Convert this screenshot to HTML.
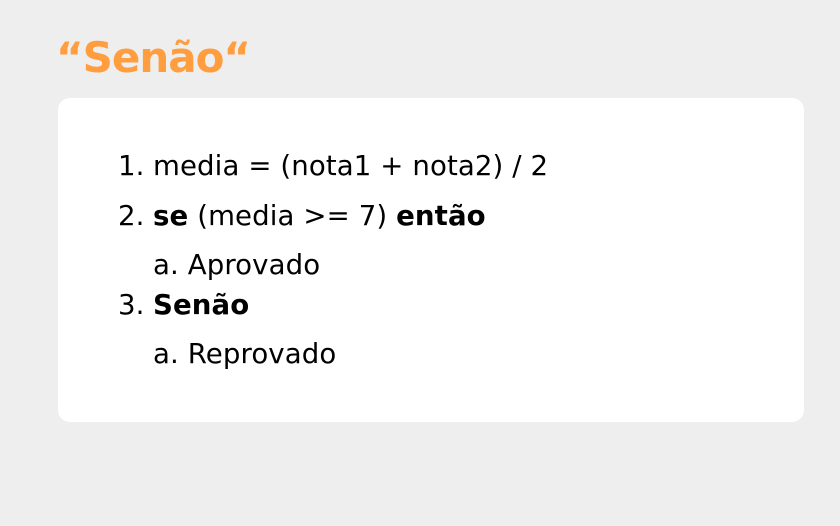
<!DOCTYPE html>
<html><head><meta charset="utf-8"><style>
html,body{margin:0;padding:0;}
body{width:840px;height:526px;background:#eeeeee;position:relative;overflow:hidden;font-family:"DejaVu Sans","Liberation Sans",sans-serif;}
h1{position:absolute;left:56px;top:33px;margin:0;font-size:42px;font-weight:bold;color:#ff9d3f;letter-spacing:-1px;}
.box{position:absolute;left:58px;top:98px;width:746px;height:324px;background:#fff;border-radius:12px;}
.l{position:absolute;font-size:27.6px;color:#000;white-space:nowrap;line-height:30px;letter-spacing:0.1px;}
.n{position:absolute;left:118px;}
.t{position:absolute;left:153px;}
b{font-weight:bold;}
</style></head><body>
<h1>“Senão“</h1>
<div class="box"></div>
<div class="l n" style="top:151px">1.</div><div class="l t" style="top:151px">media = (nota1 + nota2) / 2</div>
<div class="l n" style="top:201px">2.</div><div class="l t" style="top:201px"><b>se</b> (media &gt;= 7) <b>então</b></div>
<div class="l t" style="top:250px">a. Aprovado</div>
<div class="l n" style="top:290px">3.</div><div class="l t" style="top:290px"><b>Senão</b></div>
<div class="l t" style="top:339px">a. Reprovado</div>
</body></html>
